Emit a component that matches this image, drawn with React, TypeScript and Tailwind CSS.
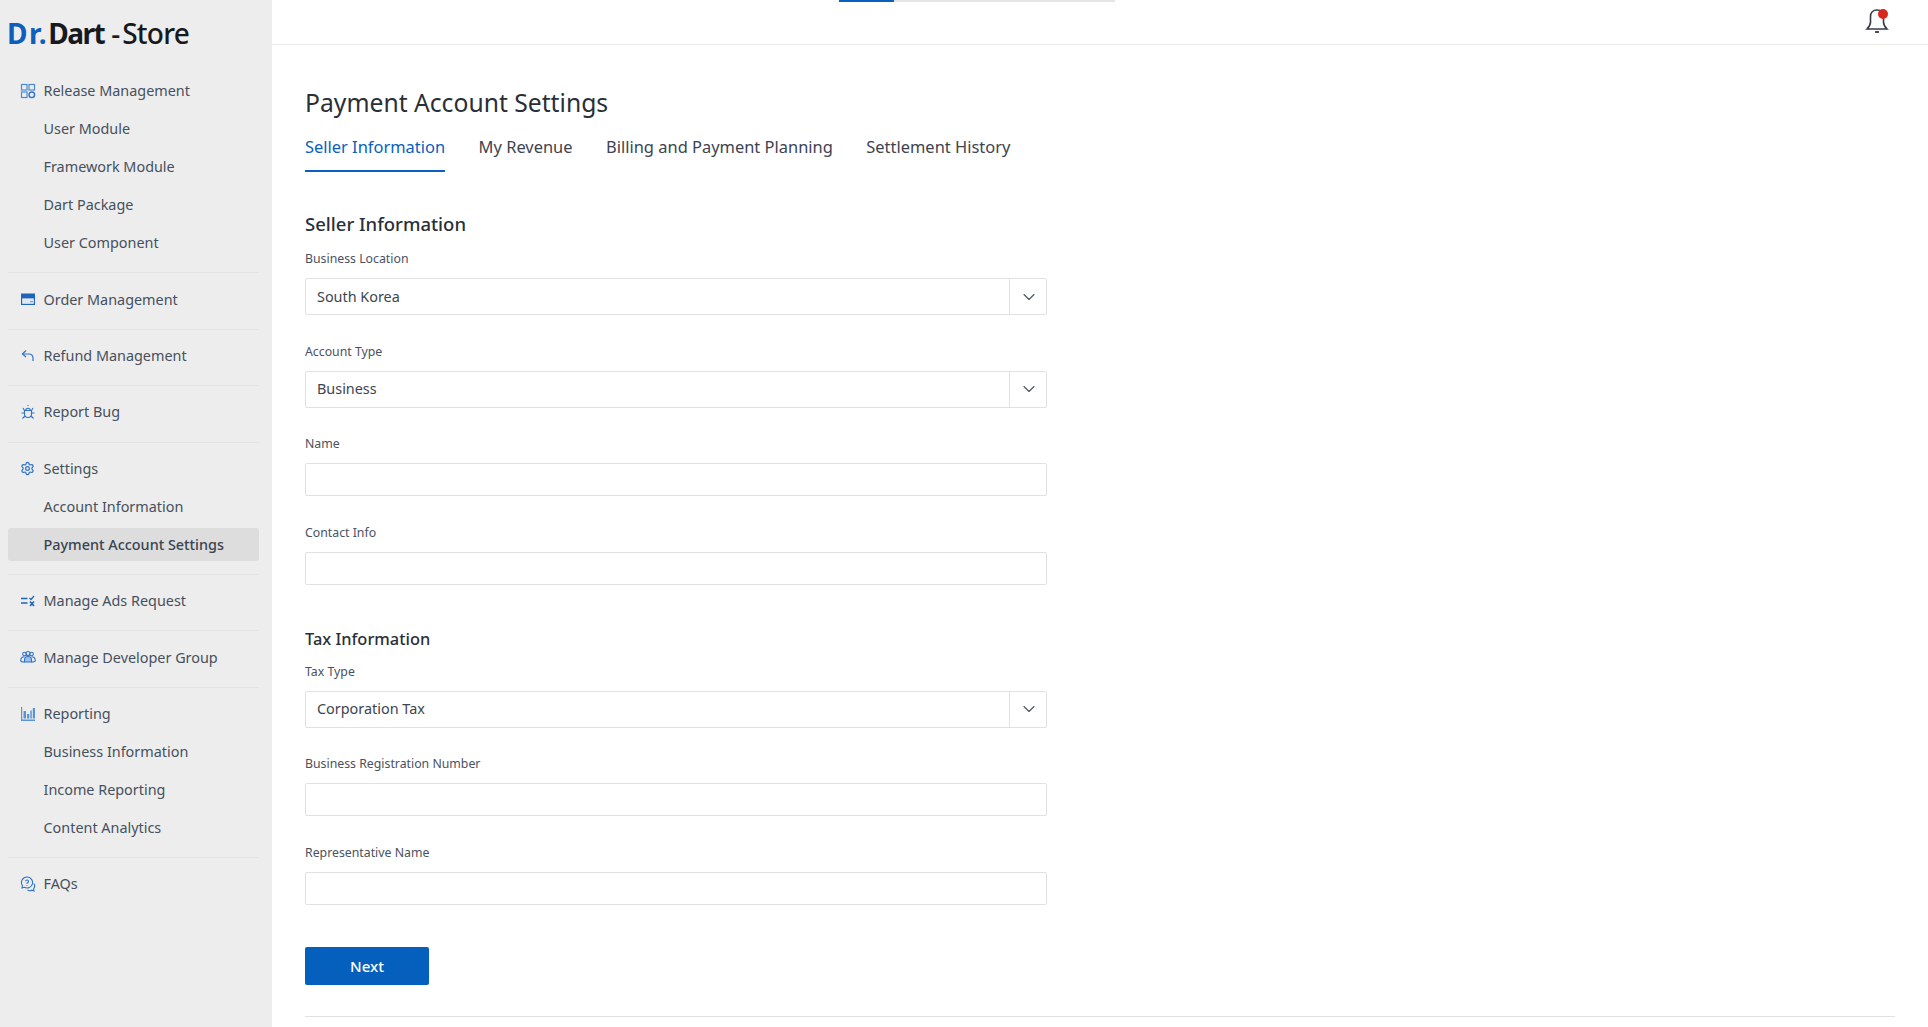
import { Settings, ChevronDown } from "lucide-react";

const blue = "#2f74c8";

function ReleaseIcon() {
  return (
    <svg width="16" height="16" viewBox="0 0 16 16" fill="none" stroke="#4c8ad2" strokeWidth="1.2">
      <rect x="1.5" y="1.5" width="5.5" height="5.5" />
      <rect x="9" y="1.5" width="5.5" height="5.5" />
      <rect x="1.5" y="9" width="5.5" height="5.5" />
      <circle cx="11.8" cy="11.8" r="2.8" stroke="#2f74c8" strokeWidth="1.4" />
    </svg>
  );
}

function OrderIcon() {
  return (
    <svg width="16" height="16" viewBox="0 0 16 16">
      <path
        fill="#1f63bb"
        fillRule="evenodd"
        d="M1 2.5h14v11.5H1V2.5ZM2.2 7.5v5.3h11.6V7.5H2.2Zm7.8 2.5h3v1.3h-3V10Z"
      />
      <path fill="#d6e3f3" d="M2.2 7.5h11.6v5.3H2.2z" opacity="0.5" />
    </svg>
  );
}

function RefundIcon() {
  return (
    <svg width="16" height="16" viewBox="0 0 16 16" fill="none" stroke={blue} strokeWidth="1.2">
      <path d="M6 2.5 2.5 6 6 9" />
      <path d="M2.5 6H9c2.5 0 4 1.8 4 4.2V13" />
    </svg>
  );
}

function BugIcon() {
  return (
    <svg width="16" height="16" viewBox="0 0 16 16" fill="none" stroke={blue} strokeWidth="1.1">
      <path d="M4.5 6.5h7V10a3.5 3.5 0 0 1-7 0V6.5Z" />
      <path d="M5.7 6.5a2.3 2.3 0 0 1 4.6 0M8 2V1M3 4l1.5 2.5M13 4l-1.5 2.5M1.5 9h3M11.5 9h3M2.5 14.5 5 12M13.5 14.5 11 12" />
    </svg>
  );
}

function AdsIcon() {
  return (
    <svg width="16" height="16" viewBox="0 0 16 16" fill="none" stroke="#1f63bb" strokeWidth="1.4">
      <path d="M1 5.5h6.5M1 10h6.5" />
      <path d="M10 13l4-4.5M10 8.5l4 4.5" strokeWidth="1.6" />
      <path d="M9.5 5 11 6.5l3-3.5" strokeWidth="1.2" />
    </svg>
  );
}

function GroupIcon() {
  return (
    <svg width="16" height="16" viewBox="0 0 16 16" fill="none" stroke={blue} strokeWidth="1.1">
      <circle cx="4.5" cy="5" r="1.8" />
      <circle cx="11.5" cy="5" r="1.8" />
      <circle cx="8" cy="4.5" r="2" />
      <path d="M4.5 13c-3 0-3.8-.5-3.8-1.500 0-2 1.500-3.800 3.800-3.800M11.500 13c3 0 3.800-.5 3.800-1.500 0-2-1.500-3.800-3.800-3.800" />
      <path d="M4.500 13V11c0-2 1.500-3.500 3.500-3.500s3.500 1.500 3.500 3.500v2H4.500Z" fill="#9fc0e6" />
    </svg>
  );
}

function ReportIcon() {
  return (
    <svg width="16" height="16" viewBox="0 0 16 16" fill="#5b94d6">
      <path d="M1 1h1.200v12.500H15V15H1V1Z" />
      <path d="M3.500 5H6v7.500H3.500V5ZM7 8h2.300v4.500H7V8ZM10.300 4.500h1.500v8h-1.500v-8ZM12.800 2H15v10.500h-2.200V2Z" />
    </svg>
  );
}

function FaqIcon() {
  return (
    <svg width="16" height="16" viewBox="0 0 16 16" fill="none" stroke={blue} strokeWidth="1.1">
      <path d="M7 1a5.500 5.500 0 0 0-4.500 8.700L2 12l2.400-.7A5.500 5.500 0 1 0 7 1Z" />
      <path d="M5.500 5.300A1.500 1.500 0 1 1 7 7v1M7 9v.8" />
      <path d="M13.800 7.500a4.500 4.500 0 0 1-.3 5.500l.5 2-2.200-.8a4.500 4.500 0 0 1-4.300-.2" />
    </svg>
  );
}

type NavGroup = {
  label: string;
  icon: React.ReactNode;
  children?: string[];
};

const navGroups: NavGroup[] = [
  {
    label: "Release Management",
    icon: <ReleaseIcon />,
    children: ["User Module", "Framework Module", "Dart Package", "User Component"],
  },
  { label: "Order Management", icon: <OrderIcon /> },
  { label: "Refund Management", icon: <RefundIcon /> },
  { label: "Report Bug", icon: <BugIcon /> },
  {
    label: "Settings",
    icon: <Settings size={15} color={blue} strokeWidth={2} />,
    children: ["Account Information", "Payment Account Settings"],
  },
  { label: "Manage Ads Request", icon: <AdsIcon /> },
  { label: "Manage Developer Group", icon: <GroupIcon /> },
  {
    label: "Reporting",
    icon: <ReportIcon />,
    children: ["Business Information", "Income Reporting", "Content Analytics"],
  },
  { label: "FAQs", icon: <FaqIcon /> },
];

const tabs = ["Seller Information", "My Revenue", "Billing and Payment Planning", "Settlement History"];

function Sidebar() {
  return (
    <aside className="h-[1027px] w-[272px] shrink-0 bg-[#ededed]">
      <div className="flex h-[65px] items-center pl-[7px] text-[28px] leading-none text-[#17191c]">
        <span className="font-bold tracking-[1.6px] text-[#0e5fbd]">Dr.</span>
        <span className="font-bold tracking-[-1.5px]">Dart</span>
        <span className="ml-[7px] font-medium">-</span>
        <span className="ml-[2px] font-medium tracking-[-0.7px]">Store</span>
      </div>
      <nav className="pl-[8px] pr-[13px]">
        {navGroups.map((group, index) => (
          <div
            key={group.label}
            className={`pb-[10.4px] pt-[7px] ${index < navGroups.length - 1 ? "border-b border-[#e3e3e3]" : ""}`}
          >
            <div className="flex h-[38px] items-center whitespace-nowrap text-[14.4px] text-[#46505e]">
              <span className="flex w-[35.5px] justify-center pl-[4px]">{group.icon}</span>
              <span>{group.label}</span>
            </div>
            {group.children?.map((child) => (
              <div key={child} className="flex h-[38px] items-center whitespace-nowrap text-[14.4px] text-[#46505e]">
                <div
                  className={`flex h-[33px] w-full items-center rounded-[3px] pl-[35.5px] ${
                    child === "Payment Account Settings" ? "bg-[#dddddd] font-medium text-[#3a4350]" : ""
                  }`}
                >
                  {child}
                </div>
              </div>
            ))}
          </div>
        ))}
      </nav>
    </aside>
  );
}

function SelectField({ label, value }: { label: string; value: string }) {
  return (
    <div>
      <div className="mb-[10px] h-[18px] text-[12.3px] leading-[18px] text-[#4a5260]">{label}</div>
      <div className="flex h-[37px] w-[742px] items-center rounded-[2px] border border-[#dfe1e4] bg-white text-[14.4px] text-[#3d4450]">
        <span className="flex-1 pl-[11px]">{value}</span>
        <span className="flex h-full w-[37px] items-center justify-center border-l border-[#dfe1e4] pl-[1.5px]">
          <ChevronDown size={20} color="#4a5260" strokeWidth={1.3} />
        </span>
      </div>
    </div>
  );
}

function TextField({ label }: { label: string }) {
  return (
    <div>
      <div className="mb-[10px] h-[18px] text-[12.3px] leading-[18px] text-[#4a5260]">{label}</div>
      <div className="h-[33px] w-[742px] rounded-[2px] border border-[#dfe1e4] bg-white" />
    </div>
  );
}

function BellIcon() {
  return (
    <div className="relative h-[26px] w-[24px]">
      <svg width="24" height="26" viewBox="0 0 24 26" fill="none" stroke="#343b47" strokeWidth="1.6">
        <path d="M2 22c2-2 3.500-3.500 3.500-7V9.500C5.500 5.500 8 3 12 3s6.500 2.500 6.500 6.500V15c0 3.500 1.500 5 3.500 7H2Z" />
        <path d="M10 25h4" strokeWidth="1.8" />
      </svg>
      <span className="absolute right-[1px] top-[2px] h-[10px] w-[10px] rounded-full bg-[#d8281e]" />
    </div>
  );
}

export default function App() {
  return (
    <div className="flex h-[1027px] w-full overflow-hidden bg-white font-['Noto_Sans',sans-serif]">
      <Sidebar />
      <main className="relative min-w-0 flex-1">
        <div className="absolute left-[567px] top-0 flex h-[2px] w-[276px] bg-[#e5e5e5]">
          <div className="h-full w-[55px] bg-[#0a60bf]" />
        </div>
        <header className="flex h-[45px] items-start justify-end border-b border-[#ececec] pr-[39px] pt-[7px]">
          <BellIcon />
        </header>
        <div className="px-[33px]">
          <h1 className="mt-[38px] h-[40px] text-[24.7px] leading-[40px] font-normal text-[#2a2f37]">
            Payment Account Settings
          </h1>
          <div className="mt-[1px] flex gap-[33.5px]">
            {tabs.map((tab, index) => (
              <div
                key={tab}
                className={`flex h-[48px] items-center border-b-2 text-[16.45px] ${
                  index === 0 ? "border-[#0a60bf] text-[#0a60bf]" : "border-transparent text-[#3d4450]"
                }`}
              >
                {tab}
              </div>
            ))}
          </div>
          <h2 className="mb-[12.5px] mt-[37.5px] h-[28px] text-[18.5px] leading-[28px] font-medium text-[#2a2f37]">
            Seller Information
          </h2>
          <div className="flex flex-col gap-[27.5px]">
            <SelectField label="Business Location" value="South Korea" />
            <SelectField label="Account Type" value="Business" />
            <TextField label="Name" />
            <TextField label="Contact Info" />
          </div>
          <h2 className="mb-[10px] mt-[40px] h-[28px] text-[16.4px] leading-[28px] font-medium text-[#2a2f37]">
            Tax Information
          </h2>
          <div className="flex flex-col gap-[27.5px]">
            <SelectField label="Tax Type" value="Corporation Tax" />
            <TextField label="Business Registration Number" />
            <TextField label="Representative Name" />
          </div>
          <button
            type="button"
            className="mt-[42.5px] block h-[38px] w-[124px] rounded-[2px] bg-[#0560bd] text-[15px] font-medium text-white"
          >
            Next
          </button>
          <div className="mt-[31px] border-t border-[#dfe1e4]" />
        </div>
      </main>
    </div>
  );
}
